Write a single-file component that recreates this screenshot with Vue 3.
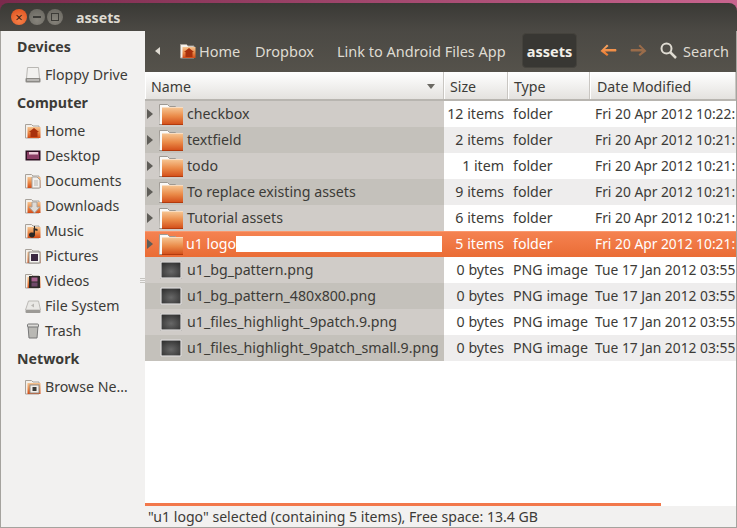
<script setup>
const places = [
  { title: 'Devices', items: [{ label: 'Floppy Drive', icon: 'drive' }] },
  {
    title: 'Computer',
    items: [
      { label: 'Home', icon: 'home' },
      { label: 'Desktop', icon: 'desktop' },
      { label: 'Documents', icon: 'docs' },
      { label: 'Downloads', icon: 'downloads' },
      { label: 'Music', icon: 'music' },
      { label: 'Pictures', icon: 'pictures' },
      { label: 'Videos', icon: 'videos' },
      { label: 'File System', icon: 'disk' },
      { label: 'Trash', icon: 'trash' }
    ]
  },
  { title: 'Network', items: [{ label: 'Browse Ne…', icon: 'network' }] }
]

const files = [
  { name: 'checkbox', size: '12 items', type: 'folder', date: 'Fri 20 Apr 2012 10:22:', dir: true },
  { name: 'textfield', size: '2 items', type: 'folder', date: 'Fri 20 Apr 2012 10:21:', dir: true },
  { name: 'todo', size: '1 item', type: 'folder', date: 'Fri 20 Apr 2012 10:21:', dir: true },
  { name: 'To replace existing assets', size: '9 items', type: 'folder', date: 'Fri 20 Apr 2012 10:21:', dir: true },
  { name: 'Tutorial assets', size: '6 items', type: 'folder', date: 'Fri 20 Apr 2012 10:21:', dir: true },
  { name: 'u1 logo', size: '5 items', type: 'folder', date: 'Fri 20 Apr 2012 10:21:', dir: true, selected: true },
  { name: 'u1_bg_pattern.png', size: '0 bytes', type: 'PNG image', date: 'Tue 17 Jan 2012 03:55' },
  { name: 'u1_bg_pattern_480x800.png', size: '0 bytes', type: 'PNG image', date: 'Tue 17 Jan 2012 03:55' },
  { name: 'u1_files_highlight_9patch.9.png', size: '0 bytes', type: 'PNG image', date: 'Tue 17 Jan 2012 03:55' },
  { name: 'u1_files_highlight_9patch_small.9.png', size: '0 bytes', type: 'PNG image', date: 'Tue 17 Jan 2012 03:55' }
]
</script>

<template>
  <div class="window">
    <svg class="defs" width="0" height="0">
      <defs>
        <linearGradient id="folderFill" x1="0" y1="0" x2="0" y2="1">
          <stop offset="0" stop-color="#f6c592" />
          <stop offset="0.5" stop-color="#ea8a48" />
          <stop offset="1" stop-color="#d24a16" />
        </linearGradient>
        <radialGradient id="thumbFill" cx="0.5" cy="0.6" r="0.7">
          <stop offset="0" stop-color="#686868" />
          <stop offset="1" stop-color="#303030" />
        </radialGradient>
        <linearGradient id="backFill" x1="0" y1="0" x2="0" y2="1">
          <stop offset="0" stop-color="#fba866" />
          <stop offset="1" stop-color="#e8772c" />
        </linearGradient>
        <symbol id="folder" viewBox="0 0 24 24">
          <path d="M0.500 2.500h8l2 2h6v18h-16.500z" fill="#faf9f7" stroke="#9d9993" />
          <rect x="3" y="5.500" width="21" height="17.500" fill="url(#folderFill)" />
          <path d="M3 5.500h21" stroke="#f9dcc0" />
          <path d="M3 22.500h21" stroke="#b23a0d" />
        </symbol>
        <symbol id="smallFolder" viewBox="0 0 16 16">
          <path d="M0.500 1.500h6l1.500 1.500h6v12h-13.500z" fill="#f4f0ea" stroke="#a8a29b" />
          <rect x="2.500" y="4" width="13" height="11" fill="url(#folderFill)" />
        </symbol>
      </defs>
    </svg>

    <header class="titlebar">
      <div class="controls">
        <span class="ctl close">×</span>
        <span class="ctl"><i class="min"></i></span>
        <span class="ctl"><i class="max"></i></span>
      </div>
      <span class="title">assets</span>
    </header>

    <div class="body">
      <aside class="sidebar">
        <section v-for="group in places" :key="group.title" class="group">
          <h4>{{ group.title }}</h4>
          <ul>
            <li v-for="item in group.items" :key="item.label">
              <svg class="place-icon" width="16" height="16" viewBox="0 0 16 16">
                <template v-if="item.icon === 'drive'">
                  <path d="M2.500 0.500h11l1 11h-13z" fill="#f2f1ef" stroke="#b9b7b3" />
                  <rect x="0.500" y="11" width="15" height="4.500" rx="1" fill="#8c8a86" />
                  <rect x="2" y="12.500" width="12" height="1" fill="#e8e6e3" />
                </template>
                <template v-else-if="item.icon === 'desktop'">
                  <rect x="0.500" y="2.500" width="15" height="10" fill="#2c1020" />
                  <rect x="2" y="4" width="12" height="7" fill="#8c3f66" />
                  <rect x="4" y="4" width="9" height="2.500" fill="#e9c9d6" />
                </template>
                <template v-else-if="item.icon === 'disk'">
                  <path d="M3.500 3h10l2 9h-15z" fill="#e9e8e5" stroke="#bbb9b5" />
                  <rect x="0.500" y="12" width="15" height="3" rx="1" fill="#9c9a96" />
                  <path d="M6 7.500l3-2v4z" fill="#b9b7b3" />
                </template>
                <template v-else-if="item.icon === 'trash'">
                  <path d="M3 3h10l-1 12h-8z" fill="#b9b8b4" stroke="#777" />
                  <rect x="2.500" y="1" width="11" height="3" rx="1" fill="#dcdbd8" stroke="#777" />
                </template>
                <template v-else>
                  <use href="#smallFolder" width="16" height="16" />
                  <path v-if="item.icon === 'home'" d="M9 5l5 4h-1.500v5h-7v-5h-1.500z" fill="#a8300c" />
                  <g v-else-if="item.icon === 'docs'">
                    <path d="M7 4h5l3 3v8h-8z" fill="#f3f1ee" stroke="#a8a29b" />
                    <path d="M9 8h4M9 10h4M9 12h4" stroke="#b8b3ad" />
                  </g>
                  <path v-else-if="item.icon === 'downloads'" d="M7 4h5v5h3l-5.500 6-5.500-6h3z" fill="#dedbd6" stroke="#a8a29b" />
                  <path v-else-if="item.icon === 'music'" d="M9 3h1v9a3 2.500 0 1 1-1.500-2.200V5l4 1v2l-3.500-1z" fill="#2b2926" />
                  <g v-else-if="item.icon === 'pictures'">
                    <rect x="4" y="4" width="11" height="11" fill="#f4f3f0" stroke="#8f8b85" />
                    <rect x="6" y="6" width="7" height="7" fill="#3a2740" />
                  </g>
                  <g v-else-if="item.icon === 'videos'">
                    <rect x="4" y="3" width="11" height="12" fill="#2d2a28" />
                    <rect x="6.500" y="4.500" width="6" height="4" fill="#a7628f" />
                    <rect x="6.500" y="9.500" width="6" height="4" fill="#6e4868" />
                  </g>
                  <g v-else-if="item.icon === 'network'">
                    <rect x="5" y="6" width="9" height="8" fill="#f1eeea" stroke="#8f8b85" />
                    <rect x="7.500" y="8" width="4" height="4" fill="#3c3b37" />
                  </g>
                </template>
              </svg>
              <span>{{ item.label }}</span>
            </li>
          </ul>
        </section>
        <div class="grip"><i></i><i></i><i></i></div>
      </aside>

      <main class="content">
        <nav class="toolbar">
          <span class="crumb-back"></span>
          <span class="crumb home">
            <svg width="16" height="16" viewBox="0 0 16 16">
              <use href="#smallFolder" width="16" height="16" />
              <path d="M9 5l5 4h-1.500v5h-7v-5h-1.500z" fill="#a8300c" />
            </svg>
            Home
          </span>
          <span class="crumb dropbox">Dropbox</span>
          <span class="crumb link">Link to Android Files App</span>
          <span class="crumb current">assets</span>
          <svg class="arrow" width="18" height="14" viewBox="0 0 18 14">
            <path d="M0.500 7l6.500-6.500 1.500 1.500-3.500 3h11a2 2 0 0 1 0 2.500h-11l3.500 3-1.500 1.500z" fill="url(#backFill)" />
          </svg>
          <svg class="arrow fwd" width="18" height="14" viewBox="0 0 18 14">
            <path d="M17.500 7l-6.500-6.500-1.500 1.500 3.500 3h-11a2 2 0 0 0 0 2.500h11l-3.500 3 1.500 1.500z" fill="#9a6c4a" />
          </svg>
          <span class="search">
            <svg width="17" height="17" viewBox="0 0 17 17">
              <circle cx="6.500" cy="6.500" r="5" fill="none" stroke="#dfdbd2" stroke-width="2" />
              <path d="M10 10l6 6" stroke="#dfdbd2" stroke-width="2.500" />
            </svg>
            Search
          </span>
        </nav>

        <div class="head row-grid">
          <div class="cell">Name<span class="sort"></span></div>
          <div class="cell">Size</div>
          <div class="cell">Type</div>
          <div class="cell">Date Modified</div>
        </div>

        <div class="list">
          <div
            v-for="f in files"
            :key="f.name"
            class="row row-grid"
            :class="{ selected: f.selected }"
          >
            <div class="name">
              <span class="expander" :class="{ hidden: !f.dir }"></span>
              <svg v-if="f.dir" class="file-icon" width="24" height="24"><use href="#folder" width="24" height="24" /></svg>
              <svg v-else class="file-icon" width="24" height="24" viewBox="0 0 24 24">
                <rect x="1" y="3" width="22" height="18" fill="#aaa7a3" />
                <rect x="1.500" y="3.500" width="21" height="17" fill="#fbfafa" />
                <rect x="2.500" y="4.500" width="19" height="15" fill="url(#thumbFill)" />
              </svg>
              <span class="label">{{ f.name }}</span>
              <span v-if="f.selected" class="rename"></span>
            </div>
            <div class="size">{{ f.size }}</div>
            <div class="type">{{ f.type }}</div>
            <div class="date">{{ f.date }}</div>
          </div>
        </div>

        <div class="progress"></div>
        <footer class="status">"u1 logo" selected (containing 5 items), Free space: 13.4 GB</footer>
      </main>
    </div>
  </div>
</template>

<style>
html, body { margin: 0; background: linear-gradient(90deg, #7a2a4c, #c8648e); }
</style>

<style scoped>
.window {
  box-sizing: border-box;
  width: 737px;
  height: 528px;
  padding-top: 3px;
  display: flex;
  flex-direction: column;
  font-family: "Noto Sans", sans-serif;
  font-size: 14.2px;
  color: #3c3b37;
  overflow: hidden;
}
.defs { position: absolute; }

.titlebar {
  flex: none;
  height: 28px;
  display: flex;
  align-items: center;
  border-radius: 8px 8px 0 0;
  background: linear-gradient(#3a3935, #4b4944);
  padding-left: 11px;
}
.controls { display: flex; gap: 2px; width: 65px; }
.ctl {
  width: 16px;
  height: 16px;
  border-radius: 50%;
  background: radial-gradient(circle at 50% 70%, #87847c, #65635c);
  display: flex;
  align-items: center;
  justify-content: center;
  color: #3a1d10;
  font-size: 13px;
  line-height: 1;
}
.ctl.close { background: radial-gradient(circle at 50% 70%, #f6824a, #dc4c1a); }
.ctl .min { width: 8px; height: 2px; background: #3c3b37; }
.ctl .max { width: 6px; height: 6px; border: 1px solid #3c3b37; }
.title { color: #dfdbd2; font-weight: 700; }

.body {
  flex: 1;
  display: flex;
  min-height: 0;
  border-left: 1px solid #a5a39e;
  border-right: 1px solid #a5a39e;
  border-bottom: 1px solid #a5a39e;
}

.sidebar {
  flex: none;
  position: relative;
  width: 144px;
  box-sizing: border-box;
  padding-top: 4px;
  background: #f2f1f0;
}
.group { margin-bottom: 4px; }
.group h4 {
  margin: 0 0 3px;
  height: 24px;
  line-height: 24px;
  padding-left: 16px;
  font-size: 14.2px;
  font-weight: 700;
}
.group ul { margin: 0; padding: 0; list-style: none; }
.group li {
  height: 25px;
  padding-left: 24px;
  display: flex;
  align-items: center;
  gap: 4px;
  white-space: nowrap;
}
.place-icon { flex: none; }
.grip { position: absolute; right: 0; top: 247px; width: 5px; }
.grip i { display: block; height: 1px; margin-bottom: 1px; background: #c6c4c0; }

.content {
  flex: 1;
  min-width: 0;
  display: flex;
  flex-direction: column;
  background: #fff;
}

.toolbar {
  flex: none;
  height: 41px;
  box-sizing: border-box;
  padding-bottom: 2px;
  display: flex;
  align-items: center;
  background: linear-gradient(#4b4944, #55524b);
  color: #dfdbd2;
  font-size: 14.5px;
  white-space: nowrap;
}
.crumb-back {
  margin: 0 20px 0 10px;
  border-style: solid;
  border-width: 4px 5px 4px 0;
  border-color: transparent #dfdbd2 transparent transparent;
}
.crumb { display: flex; align-items: center; gap: 3px; }
.crumb.home { width: 75px; }
.crumb.dropbox { width: 82px; }
.crumb.link { width: 179px; margin-right: 6px; }
.crumb.current {
  box-sizing: border-box;
  height: 35px;
  width: 55px;
  margin-right: 23px;
  justify-content: center;
  border-radius: 4px;
  background: #383733;
  border: 1px solid #45433d;
  color: #f2efe8;
  font-weight: 700;
}
.arrow { flex: none; margin-right: 11px; }
.arrow.fwd { margin-right: 13px; }
.search { display: flex; align-items: center; gap: 6px; }

.row-grid {
  display: grid;
  grid-template-columns: 299px 64px 82px 1fr;
}
.head {
  flex: none;
  height: 29px;
  box-sizing: border-box;
  border-bottom: 2px solid #b8b5b0;
  background: linear-gradient(#ffffff, #e4e2df);
}
.head .cell {
  position: relative;
  line-height: 29px;
  padding-left: 6px;
  border-right: 1px solid #c9c6c2;
  box-shadow: inset 1px 0 0 #fff;
  overflow: hidden;
  white-space: nowrap;
}
.head .cell:last-child { padding-left: 7px; }
.sort {
  position: absolute;
  right: 8px;
  top: 12px;
  border-style: solid;
  border-width: 5px 4px 0;
  border-color: #6b6963 transparent transparent;
}

.list { flex: 1; min-height: 0; }
.row {
  height: 26px;
  line-height: 26px;
  white-space: nowrap;
  overflow: hidden;
}
.row:nth-child(even) { background: #eeeded; }
.name {
  display: flex;
  align-items: center;
  background: #d0ccc8;
  min-width: 0;
}
.row:nth-child(even) .name { background: #c4c1bb; }
.expander {
  flex: none;
  margin: 0 6px 0 2px;
  border-style: solid;
  border-width: 5px 0 5px 6px;
  border-color: transparent transparent transparent #5f5d58;
}
.expander.hidden { visibility: hidden; }
.file-icon { flex: none; margin-right: 4px; }
.size { text-align: right; padding-right: 4px; }
.type { padding-left: 5px; }
.date { padding-left: 5px; overflow: hidden; font-size: 13.8px; }

.row.selected {
  background: linear-gradient(#f58352, #ea6c35);
  color: #fff;
  box-shadow: inset 0 1px 0 #f9986e;
}
.row.selected .name { background: none; }
.row.selected .label { margin-left: -1px; }
.rename {
  flex: none;
  width: 206px;
  height: 16px;
  background: #fff;
  margin-left: auto;
  margin-right: 3px;
}

.progress { flex: none; height: 3px; width: 516px; background: #f2784b; }
.status {
  flex: none;
  height: 21px;
  line-height: 21px;
  padding-left: 3px;
  background: #f2f1f0;
  font-size: 14.1px;
  white-space: nowrap;
}
</style>
